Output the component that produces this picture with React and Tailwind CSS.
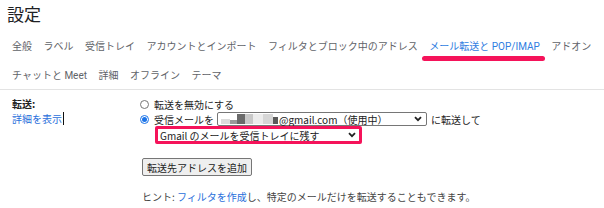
import React from 'react';

const tabsTop = [
  { label: '全般' },
  { label: 'ラベル' },
  { label: '受信トレイ' },
  { label: 'アカウントとインポート' },
  { label: 'フィルタとブロック中のアドレス' },
  { label: 'メール転送と POP/IMAP', active: true },
  { label: 'アドオン' },
];

const tabsBottom = ['チャットと Meet', '詳細', 'オフライン', 'テーマ'];

// blurred address blocks inside the first select
const mosaic = [
  { w: 'w-[9px]', h: 'h-[5px]', bg: 'bg-[#dcdcdc]' },
  { w: 'w-[7px]', h: 'h-[4px]', bg: 'bg-[#9a9a9a]' },
  { w: 'w-[8px]', h: 'h-[10px]', bg: 'bg-[#6a6a6a]' },
  { w: 'w-[8px]', h: 'h-[10px]', bg: 'bg-[#c8c8c8]' },
  { w: 'w-[10px]', h: 'h-[10px]', bg: 'bg-[#ececec]' },
  { w: 'w-[10px]', h: 'h-[10px]', bg: 'bg-[#d6d6d6]' },
  { w: 'w-[5px]', h: 'h-[7px]', bg: 'bg-[#5a5a5a]' },
];

const Chevron = () => (
  <svg width="8" height="6" viewBox="0 0 8 6" className="shrink-0">
    <path d="M1 1.2 L4 4.2 L7 1.2" fill="none" stroke="#222" strokeWidth="1.8" />
  </svg>
);

const Tab = ({ label, active }) => (
  <span className={`relative whitespace-nowrap ${active ? 'text-[#2f7de1]' : 'text-[#5f6368]'}`}>
    {label}
    {active && (
      <span className="absolute left-[-7px] right-[-5px] top-[17px] h-[5px] rounded-full bg-[#f5135a]" />
    )}
  </span>
);

export default function App() {
  return (
    <div
      className="w-[604px] h-[208px] bg-white overflow-hidden text-[#222]"
      style={{ fontFamily: 'Roboto, "Noto Sans CJK JP", sans-serif' }}
    >
      {/* Title */}
      <div className="h-[32px] pl-[7px] text-[17px] leading-[31px] text-[#202124]">設定</div>

      {/* Tabs */}
      <div className="border-b border-[#e3e3e3] pl-[12px] text-[10px]">
        <div className="flex h-[29px] items-center gap-[11.5px]">
          {tabsTop.map((t) => (
            <Tab key={t.label} {...t} />
          ))}
        </div>
        <div className="flex h-[28px] items-center gap-[11.5px]">
          {tabsBottom.map((t) => (
            <Tab key={t} label={t} />
          ))}
        </div>
      </div>

      {/* Forwarding section */}
      <div className="flex text-[10px]" style={{ fontFamily: '"Noto Sans CJK JP", sans-serif' }}>
        <div className="w-[142px] shrink-0 pl-[12px] pt-[6px] leading-[15px]">
          <div className="font-bold text-[#222]">転送:</div>
          <div className="flex items-center text-[#2a6fdb]">
            詳細を表示
            <span className="ml-[1px] inline-block h-[13px] w-[1px] bg-[#111]" />
          </div>
        </div>

        <div className="flex flex-col pt-[7px]">
          <div className="flex h-[15px] items-center">
            <span className="ml-[-2px] mr-[5px] inline-block h-[9px] w-[9px] rounded-full border border-[#767676] bg-white" />
            <span>転送を無効にする</span>
          </div>

          <div className="flex h-[14px] items-center">
            <span className="ml-[-2px] mr-[5px] flex h-[9px] w-[9px] items-center justify-center rounded-full border border-[#1a73e8] bg-white">
              <span className="h-[5px] w-[5px] rounded-full bg-[#1a73e8]" />
            </span>
            <span>受信メールを</span>
            <div className="ml-[3px] flex h-[14px] w-[210px] items-center rounded-[2px] border border-[#767676] bg-white pl-[3px] pr-[4px]">
              <div className="flex h-[10px] items-end">
                {mosaic.map((m, i) => (
                  <span key={i} className={`${m.w} ${m.h} ${m.bg}`} />
                ))}
              </div>
              <span className="ml-[1px] flex-1 whitespace-nowrap">@gmail.com（使用中）</span>
              <Chevron />
            </div>
            <span className="ml-[4px] whitespace-nowrap">に転送して</span>
          </div>

          <div className="ml-[13px] w-[207px] h-[18px] rounded-[2px] border-[3px] border-[#f5135a]">
            <div className="flex h-full items-center bg-white pl-[2px] pr-[3px]">
              <span className="flex-1 whitespace-nowrap">Gmail のメールを受信トレイに残す</span>
              <Chevron />
            </div>
          </div>

          <div className="mt-[14px] flex h-[18px] w-[110px] items-center justify-center rounded-[2px] border border-[#767676] bg-[#efefef]">
            転送先アドレスを追加
          </div>

          <div className="mt-[14px] leading-[14px] whitespace-nowrap text-[#444]">
            ヒント: <span className="text-[#2a6fdb]">フィルタを作成</span>し、特定のメールだけを転送することもできます。
          </div>
        </div>
      </div>
    </div>
  );
}
